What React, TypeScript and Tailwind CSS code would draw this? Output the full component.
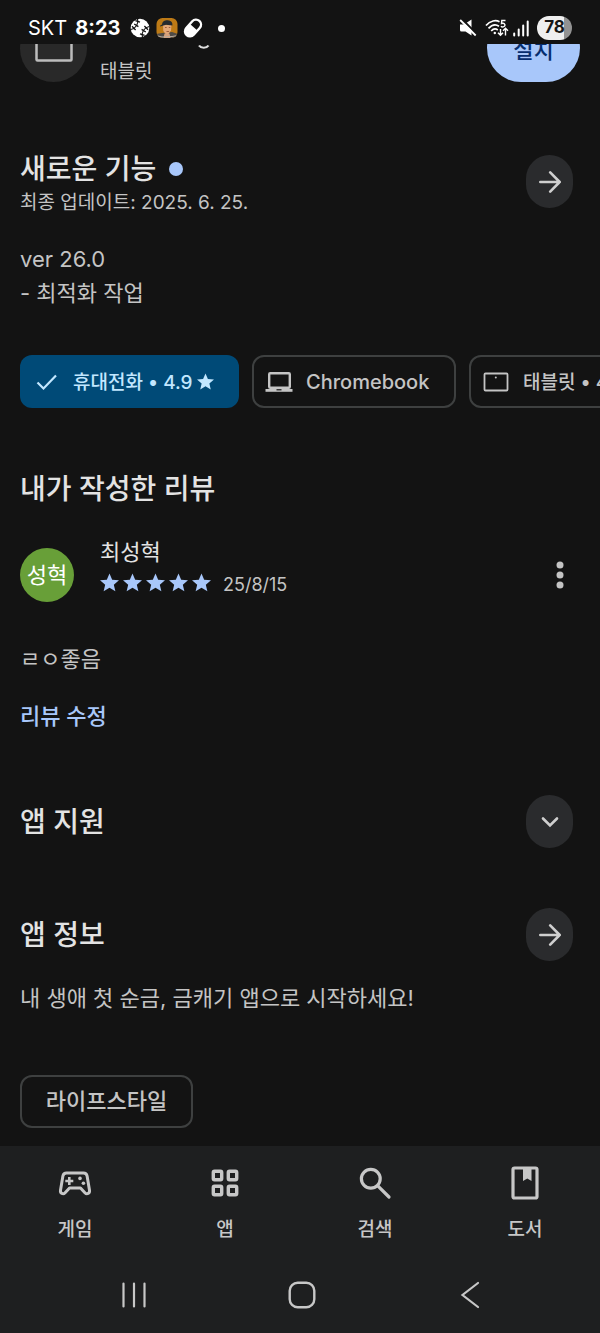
import type { ReactNode } from "react";

const STAR = "M12 1.5l3.1 7.2 7.9.7-6 5.2 1.8 7.6L12 18.1l-6.8 4.1L7 14.6 1 9.4l7.9-.7z";

function Star({ className }: { className: string }) {
  return (
    <svg viewBox="1 1 22 22" fill="currentColor" className={className}>
      <path d={STAR} />
    </svg>
  );
}

function RoundButton({ label, children }: { label: string; children: ReactNode }) {
  return (
    <button
      aria-label={label}
      className="flex h-[53px] w-[47px] shrink-0 items-center justify-center rounded-full bg-[#2a2b2d] text-[#cfcfcf]"
    >
      {children}
    </button>
  );
}

function ArrowIcon() {
  return (
    <svg
      viewBox="0 0 22 22"
      className="h-[22px] w-[22px]"
      fill="none"
      stroke="currentColor"
      strokeWidth={2.6}
      strokeLinecap="round"
      strokeLinejoin="round"
    >
      <path d="M1.300 11h19.400M11.200 1.400L20.700 11l-9.500 9.600" />
    </svg>
  );
}

function StatusBar() {
  return (
    <header className="flex h-11 items-center justify-between px-7 pt-3 text-white">
      <div className="flex items-center">
        <span className="text-[20px]">SKT</span>
        <span className="ml-2 text-[20px] font-bold">8:23</span>
        <svg viewBox="0 0 20 20" className="ml-[10px] h-5 w-5">
          <circle cx="10" cy="10" r="9.300" fill="#fff" />
          <g fill="none" stroke="#131313">
            <path d="M7.500.5C9 5.500 6 10.500.8 11.500M19.200 8.500C14 9.500 11 14.500 12.500 19.500" strokeWidth="1.100" />
            <path
              d="M5.400 2.600l4.600 1.600M4.200 6l4.200 2.600M2 8.200l3.600 3.800M18 11.800l-3.600-3.800M15.800 14l-4.200-2.600M14.600 17.400l-4.600-1.600"
              strokeWidth="1.300"
            />
          </g>
        </svg>
        <svg viewBox="0 0 22 20" className="ml-[6px] h-5 w-[22px]">
          <defs>
            <clipPath id="portrait">
              <rect x="0.5" width="21" height="20" rx="6" />
            </clipPath>
          </defs>
          <g clipPath="url(#portrait)">
            <rect width="22" height="20" fill="#bd7a16" />
            <path d="M0 20v-4l6-1 10-1 6 2v4z" fill="#4e4a45" />
            <path d="M7 7h8.500l-.5 5.500-3 4H10L7.300 13z" fill="#e3a878" />
            <path d="M8.500 15.500h5l1 4.500h-7z" fill="#d6a07a" />
            <path d="M6 6.500C6.300 3 9 2 11.800 2.200 15 2.400 16.800 4.200 16.400 7.500l-6.400-.8-6 1.800C3.400 7.700 5 7 6 6.500z" fill="#252a2f" />
            <path d="M9 9.500h1.700M12.800 9.500h1.500M10.500 13.500h2.600" stroke="#8a4a30" strokeWidth="0.800" />
            <path d="M0 17.500l6 1.500 10-.5 6-1" stroke="#b8aca0" fill="none" />
          </g>
        </svg>
        <svg viewBox="0 0 22 22" className="ml-1 h-[22px] w-[22px]">
          <g transform="rotate(42 11 11)">
            <rect x="6" y="1.500" width="10" height="19" rx="5" fill="none" stroke="#fff" strokeWidth="2.400" />
            <path d="M6 10h10v5.500a5 5 0 0 1-10 0z" fill="#fff" />
          </g>
        </svg>
        <span className="ml-[14px] h-[7px] w-[7px] rounded-full bg-white" />
      </div>
      <div className="flex items-center">
        <svg viewBox="0 0 18 18" className="h-[18px] w-[18px]">
          <path d="M1 5.500h4L12.500.5v16L6.500 12.500h-4A1.500 1.500 0 0 1 1 11z" fill="#fff" />
          <path d="M3 .2l15 15" stroke="#131313" strokeWidth="2" />
          <path d="M1.200 1l15.500 15.500" stroke="#fff" strokeWidth="1.800" />
        </svg>
        <svg viewBox="0 0 24 18" className="ml-2 h-[18px] w-6" fill="none" stroke="#fff" strokeWidth="1.700">
          <path d="M1 6.500C5.200 1.400 11 .8 14.500 2.800M3.500 9.400C7 5.600 11 5.200 14 7.200M6.200 12c2-2.200 4.700-2.400 6.600-1" />
          <circle cx="9.800" cy="14" r="1.200" fill="#fff" stroke="none" />
          <path d="M20.500 1.500h-3.700l-.3 3c3.600-1.200 4.800 2.600 1.600 3.400-.9.200-1.700-.1-2.200-.6" strokeWidth="1.400" />
          <path d="M15.500 10v6.500M13 13.800l2.500 2.500 2.500-2.500M20.500 16.500v-7M18 11.800l2.500-2.500 2.500 2.500" strokeWidth="1.400" />
        </svg>
        <svg viewBox="0 0 16 17" className="ml-1 h-[17px] w-4" stroke="#fff" strokeWidth="2" strokeLinecap="round">
          <path d="M1.200 13.500v2M5.700 9.500v6M10.200 5.500v10M14.700 1.500v14" />
        </svg>
        <span className="ml-2 flex h-6 w-[35px] items-center justify-center rounded-full bg-linear-to-r from-[#efefef] from-78% to-[#929292] to-78% text-[17px] font-bold text-[#161616]">
          78
        </span>
      </div>
    </header>
  );
}

const tabs = [
  {
    name: "게임",
    icon: (
      <svg viewBox="0 0 36 36" className="h-9 w-9" fill="none" stroke="currentColor" strokeWidth="3" strokeLinejoin="round">
        <path d="M9.500 8h17c1.900 0 3.200 1.200 3.600 3l2.400 14.200c.5 3.200-2.600 4.600-4.600 2.500L23.500 23h-11l-4.400 4.700c-2 2.100-5.100.7-4.600-2.500L5.900 11c.4-1.800 1.700-3 3.600-3z" />
        <path d="M12.300 12v8M8.300 16h8" strokeWidth="2.600" />
        <g fill="currentColor" stroke="none">
          <circle cx="23" cy="13.400" r="1.800" />
          <circle cx="26.400" cy="18.300" r="1.800" />
        </g>
      </svg>
    ),
  },
  {
    name: "앱",
    icon: (
      <svg viewBox="0 0 36 36" className="h-9 w-9" fill="none" stroke="currentColor" strokeWidth="3.400">
        <rect x="6.300" y="6.300" width="8.400" height="8.400" rx="1.200" />
        <rect x="21.300" y="6.300" width="8.400" height="8.400" rx="1.200" />
        <rect x="6.300" y="21.300" width="8.400" height="8.400" rx="1.200" />
        <rect x="21.300" y="21.300" width="8.400" height="8.400" rx="1.200" />
      </svg>
    ),
  },
  {
    name: "검색",
    icon: (
      <svg viewBox="0 0 36 36" className="h-9 w-9" fill="none" stroke="currentColor" strokeWidth="3.200" strokeLinecap="round">
        <circle cx="13.800" cy="13.800" r="9.400" />
        <path d="M20.800 20.800l11.200 11.200" />
      </svg>
    ),
  },
  {
    name: "도서",
    icon: (
      <svg viewBox="0 0 36 36" className="h-9 w-9" fill="none" stroke="currentColor" strokeWidth="3.200">
        <rect x="6" y="3" width="24" height="30" rx="1.500" />
        <path d="M16 3h8.500v13l-4.200-2.600L16 16z" fill="currentColor" stroke="none" />
      </svg>
    ),
  },
];

export default function App() {
  return (
    <div className="flex min-h-screen flex-col bg-[#131313] font-['Inter','Noto_Sans_CJK_KR',sans-serif] text-[#c4c4c4]">
      <StatusBar />

      {/* device row, scrolled halfway under the status bar */}
      <div className="flex h-[38px] items-end gap-[13px] overflow-hidden px-5">
        <div className="flex h-[67px] w-[67px] shrink-0 items-center justify-center rounded-full bg-[#292929] pb-1">
          <svg viewBox="0 0 38 30" className="h-[30px] w-[38px]">
            <rect x="1.500" y="1.500" width="35" height="27" rx="1" fill="none" stroke="#bdbdbd" strokeWidth="2.500" />
          </svg>
        </div>
        <div className="grow">
          <svg viewBox="0 0 12 8" className="ml-[98px] h-2 w-3">
            <path d="M1 1.500c2 3 7.500 3 9.500 0" fill="none" stroke="#dedede" strokeWidth="2.200" />
          </svg>
          <p className="h-[30px] text-[19px] leading-10">태블릿</p>
        </div>
        <button className="flex h-[68px] w-[93px] shrink-0 items-center justify-center rounded-full bg-[#a8c7fa] pt-1 text-[22px] font-medium text-[#062e6f]">
          설치
        </button>
      </div>

      <main className="grow pb-[18px]">
        <section className="mt-[69px] flex items-start justify-between pr-[27px] pl-5">
          <div className="pt-px leading-[34px]">
            <h2 className="flex items-center gap-[13px] text-[28px] font-medium text-[#e3e3e3]">
              새로운 기능
              <span className="h-[14px] w-[14px] rounded-full bg-[#a8c7fa]" />
            </h2>
            <p className="text-[19px]">최종 업데이트: 2025. 6. 25.</p>
          </div>
          <div className="pt-1">
            <RoundButton label="새로운 기능 자세히">
              <ArrowIcon />
            </RoundButton>
          </div>
        </section>

        <p className="mt-[22px] px-5 text-[22px] leading-[34px]">
          ver 26.0
          <br />- 최적화 작업
        </p>

        <div className="mt-[45px] flex gap-[13px] overflow-hidden pl-5 text-[19px] font-medium whitespace-nowrap">
          <button className="flex h-[53px] w-[219px] shrink-0 items-center rounded-xl bg-[#004a77] pl-4 text-[#c2e7ff]">
            <svg viewBox="0 0 22 18" className="mr-[15px] h-[18px] w-[22px]" fill="none" stroke="currentColor" strokeWidth="2.200">
              <path d="M1.500 9.500l6 6L20 2.500" />
            </svg>
            <span className="pt-[3px]">휴대전화 • 4.9</span>
            <Star className="ml-1 h-[17px] w-[17px]" />
          </button>
          <button className="flex h-[53px] w-[204px] shrink-0 items-center rounded-xl border-2 border-[#3e4040] pl-[11px] text-[20px]">
            <svg viewBox="0 0 28 20" className="mr-[13px] h-5 w-7">
              <rect x="4.200" y="1.200" width="20.600" height="14.500" rx="1" fill="none" stroke="currentColor" strokeWidth="2.400" />
              <path d="M.5 17h27v2.800H.5z" fill="currentColor" />
              <path d="M11.500 17.200h5v1.200h-5z" fill="#131313" />
            </svg>
            Chromebook
          </button>
          <button className="flex h-[53px] w-[204px] shrink-0 items-center rounded-xl border-2 border-[#3e4040] pl-3">
            <svg viewBox="0 0 26 20" className="mr-[14px] h-5 w-[26px]">
              <rect x="1.500" y="1.500" width="23" height="17" rx="1" fill="none" stroke="currentColor" strokeWidth="1.800" />
              <circle cx="12.800" cy="5.500" r="1" fill="currentColor" />
            </svg>
            <span className="pt-[3px]">태블릿 • 4.8</span>
            <Star className="ml-1 h-[17px] w-[17px]" />
          </button>
        </div>

        <section className="mt-16 pr-[27px] pl-5">
          <h2 className="text-[28px] leading-[34px] font-medium text-[#e3e3e3]">내가 작성한 리뷰</h2>
          <div className="mt-[30px] flex h-[66px] items-end">
            <div className="flex h-[54px] w-[54px] shrink-0 items-center justify-center rounded-full bg-[#689f38] text-[22px] text-white">
              성혁
            </div>
            <div className="ml-[26px] grow self-start">
              <p className="text-[22px] leading-[32px] text-[#e3e3e3]">최성혁</p>
              <div className="flex h-7 items-center">
                <div role="img" aria-label="별점 5점" className="flex gap-1 text-[#a8c7fa]">
                  {[1, 2, 3, 4, 5].map((n) => (
                    <Star key={n} className="h-[19px] w-[19px]" />
                  ))}
                </div>
                <span className="ml-3 pt-1 text-[18px]">25/8/15</span>
              </div>
            </div>
            <button aria-label="더보기" className="flex h-[54px] w-[27px] items-center justify-center">
              <svg viewBox="0 0 8 28" className="h-7 w-2" fill="currentColor">
                <circle cx="4" cy="4" r="3.500" />
                <circle cx="4" cy="14" r="3.500" />
                <circle cx="4" cy="24" r="3.500" />
              </svg>
            </button>
          </div>
          <p className="mt-10 text-[22px] leading-[34px]">ㄹㅇ좋음</p>
          <a href="#review" className="mt-[23px] block text-[22px] leading-[34px] font-medium text-[#a8c7fa]">
            리뷰 수정
          </a>
        </section>

        <section className="mt-[62px] flex items-center justify-between pr-[27px] pl-5">
          <h2 className="text-[28px] leading-[34px] font-medium text-[#e3e3e3]">앱 지원</h2>
          <RoundButton label="앱 지원 펼치기">
            <svg viewBox="0 0 18 12" className="h-3 w-[18px]" fill="none" stroke="currentColor" strokeWidth="2.600" strokeLinecap="round">
              <path d="M2 2.500l7 7 7-7" />
            </svg>
          </RoundButton>
        </section>

        <section className="mt-[60px] pl-5">
          <div className="flex items-center justify-between pr-[27px]">
            <h2 className="text-[28px] leading-[34px] font-medium text-[#e3e3e3]">앱 정보</h2>
            <RoundButton label="앱 정보 자세히">
              <ArrowIcon />
            </RoundButton>
          </div>
          <p className="mt-5 text-[22px] leading-[34px]">내 생애 첫 순금, 금캐기 앱으로 시작하세요!</p>
          <button className="mt-[60px] flex h-[53px] w-[173px] items-center justify-center rounded-xl border-2 border-[#3e4040] text-[22px] font-medium">
            라이프스타일
          </button>
        </section>
      </main>

      <footer className="bg-[#1e1f20] pt-[19px] text-[#c7c7c7]">
        <nav className="grid grid-cols-4">
          {tabs.map((tab) => (
            <a key={tab.name} href="#tab" className="flex flex-col items-center gap-4 text-[19px] leading-[26px] font-medium">
              {tab.icon}
              {tab.name}
            </a>
          ))}
        </nav>
        <div className="mt-[14px] flex h-[76px] items-center justify-around pr-[46px] pl-[50px]">
          <button aria-label="최근 앱">
            <svg viewBox="0 0 28 28" className="h-7 w-7" stroke="currentColor" strokeWidth="2.200" strokeLinecap="round">
              <path d="M3.500 2.500v23M14 2.500v23M24.500 2.500v23" />
            </svg>
          </button>
          <button aria-label="홈">
            <svg viewBox="0 0 28 28" className="h-7 w-7" fill="none" stroke="currentColor" strokeWidth="2.400">
              <rect x="1.700" y="1.700" width="24.600" height="24.600" rx="8" />
            </svg>
          </button>
          <button aria-label="뒤로">
            <svg viewBox="0 0 28 28" className="h-7 w-7" fill="none" stroke="currentColor" strokeWidth="2.200" strokeLinecap="round">
              <path d="M22 2L6.500 14 22 26" />
            </svg>
          </button>
        </div>
      </footer>
    </div>
  );
}
